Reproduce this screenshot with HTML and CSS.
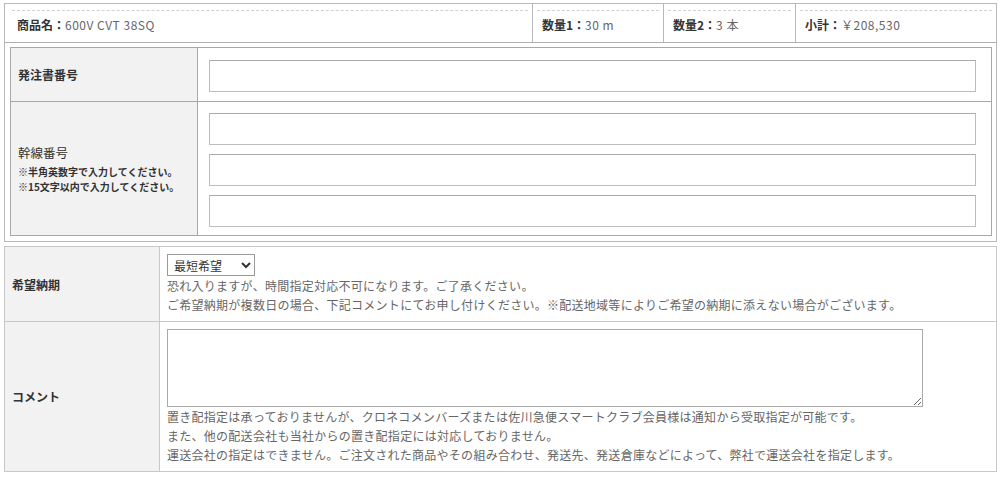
FILE: index.html
```html
<!DOCTYPE html>
<html lang="ja">
<head>
    <meta charset="UTF-8">
    <title>注文内容</title>
    <link rel="stylesheet" href="styles.css">
</head>
<body>

<div class="item-box">
    <div class="item-head">
        <div class="head-cell first"><div class="head-inner"><b>商品名：</b><span>600V CVT 38SQ</span></div></div>
        <div class="head-cell"><div class="head-inner"><b>数量1：</b><span>30 m</span></div></div>
        <div class="head-cell"><div class="head-inner"><b>数量2：</b><span>3 本</span></div></div>
        <div class="head-cell"><div class="head-inner"><b>小計：</b><span>￥208,530</span></div></div>
    </div>

    <div class="item-body">
        <div class="form-table">
            <div class="form-row">
                <div class="form-label bold">発注書番号</div>
                <div class="form-field">
                    <input type="text" class="text-input" name="order_no">
                </div>
            </div>
            <div class="form-row last">
                <div class="form-label">
                    <div class="label-title">幹線番号</div>
                    <div class="label-note">※半角英数字で入力してください。</div>
                    <div class="label-note">※15文字以内で入力してください。</div>
                </div>
                <div class="form-field stack">
                    <input type="text" class="text-input" name="line_no1">
                    <input type="text" class="text-input" name="line_no2">
                    <input type="text" class="text-input" name="line_no3">
                </div>
            </div>
        </div>
    </div>
</div>

<div class="delivery-box">
    <div class="delivery-row">
        <div class="delivery-label">希望納期</div>
        <div class="delivery-field">
            <select class="date-select" name="delivery">
                <option>最短希望</option>
                <option>日付指定</option>
            </select>
            <p class="note">恐れ入りますが、時間指定対応不可になります。ご了承ください。</p>
            <p class="note">ご希望納期が複数日の場合、下記コメントにてお申し付けください。※配送地域等によりご希望の納期に添えない場合がございます。</p>
        </div>
    </div>
    <div class="delivery-row last">
        <div class="delivery-label">コメント</div>
        <div class="delivery-field">
            <textarea class="comment" name="comment"></textarea>
            <p class="note">置き配指定は承っておりませんが、クロネコメンバーズまたは佐川急便スマートクラブ会員様は通知から受取指定が可能です。</p>
            <p class="note">また、他の配送会社も当社からの置き配指定には対応しておりません。</p>
            <p class="note">運送会社の指定はできません。ご注文された商品やその組み合わせ、発送先、発送倉庫などによって、弊社で運送会社を指定します。</p>
        </div>
    </div>
</div>

</body>
</html>
```

FILE: styles.css
```css
body {
    margin: 3px 3px 0 4px;
    font-family: "Noto Sans CJK JP", sans-serif;
    font-size: 12px;
    color: #333;
    background-color: #fff;
}

/* 商品ヘッダー + 入力テーブル */
.item-box {
    border: 1px solid #b8b8b8;
}

.item-head {
    display: grid;
    grid-template-columns: 1fr 131px 132px 201px;
    border-bottom: 1px solid #b0b0b0;
}

.head-cell {
    padding: 6px 4px 0 4px;
}

.head-cell + .head-cell {
    border-left: 1px solid #b8b8b8;
}

.head-cell.first {
    padding-left: 7px;
}

.head-inner {
    border-top: 1px dashed #d0d0d0;
    padding: 5px 0 8px 5px;
    line-height: 18px;
    white-space: nowrap;
}

.head-inner b {
    color: #333;
}

.head-inner span {
    color: #666;
    letter-spacing: 0.5px;
}

.item-body {
    padding: 4px 4px 5px 5px;
}

.form-table {
    border: 1px solid #a8a8a8;
}

.form-row {
    display: grid;
    grid-template-columns: 187px 1fr;
    border-bottom: 1px solid #a8a8a8;
}

.form-row.last {
    border-bottom: none;
}

.form-label {
    background-color: #f2f2f2;
    border-right: 1px solid #a8a8a8;
    padding-left: 7px;
    display: flex;
    flex-direction: column;
    justify-content: center;
}

.form-label.bold {
    font-weight: bold;
}

.label-title {
    font-size: 12.5px;
    line-height: 18px;
    margin-bottom: 2px;
}

.label-note {
    font-size: 10px;
    font-weight: bold;
    line-height: 15px;
}

.form-field {
    padding: 12px 15px 9px 11px;
}

.form-field.stack {
    padding: 11px 15px 8px 11px;
    display: flex;
    flex-direction: column;
    gap: 9px;
}

.text-input {
    display: block;
    width: 100%;
    height: 32px;
    box-sizing: border-box;
    border: 1px solid #bdbdbd;
    border-top-color: #aaa;
    border-radius: 0;
    margin: 0;
    padding: 4px 6px;
    font-family: inherit;
    font-size: 12px;
}

/* 希望納期・コメント */
.delivery-box {
    margin-top: 4px;
    border: 1px solid #c8c8c8;
}

.delivery-row {
    display: grid;
    grid-template-columns: 155px 1fr;
    border-bottom: 1px solid #c8c8c8;
}

.delivery-row.last {
    border-bottom: none;
}

.delivery-label {
    background-color: #f2f2f2;
    border-right: 1px solid #c8c8c8;
    padding-left: 7px;
    font-weight: bold;
    display: flex;
    align-items: center;
}

.delivery-field {
    padding: 7px;
}

.date-select {
    display: block;
    width: 88px;
    height: 22px;
    margin: 0;
    padding: 0 2px;
    border: 1px solid #9a9a9a;
    border-radius: 0;
    background-color: #fff;
    font-family: inherit;
    font-size: 12px;
    color: #333;
}

.note {
    margin: 0;
    color: #666;
    line-height: 19px;
    letter-spacing: 0.27px;
}

.comment {
    display: block;
    width: 756px;
    height: 78px;
    box-sizing: border-box;
    margin: 0;
    border: 1px solid #aaa;
    border-radius: 0;
    font-family: inherit;
    font-size: 12px;
    resize: both;
}
```
